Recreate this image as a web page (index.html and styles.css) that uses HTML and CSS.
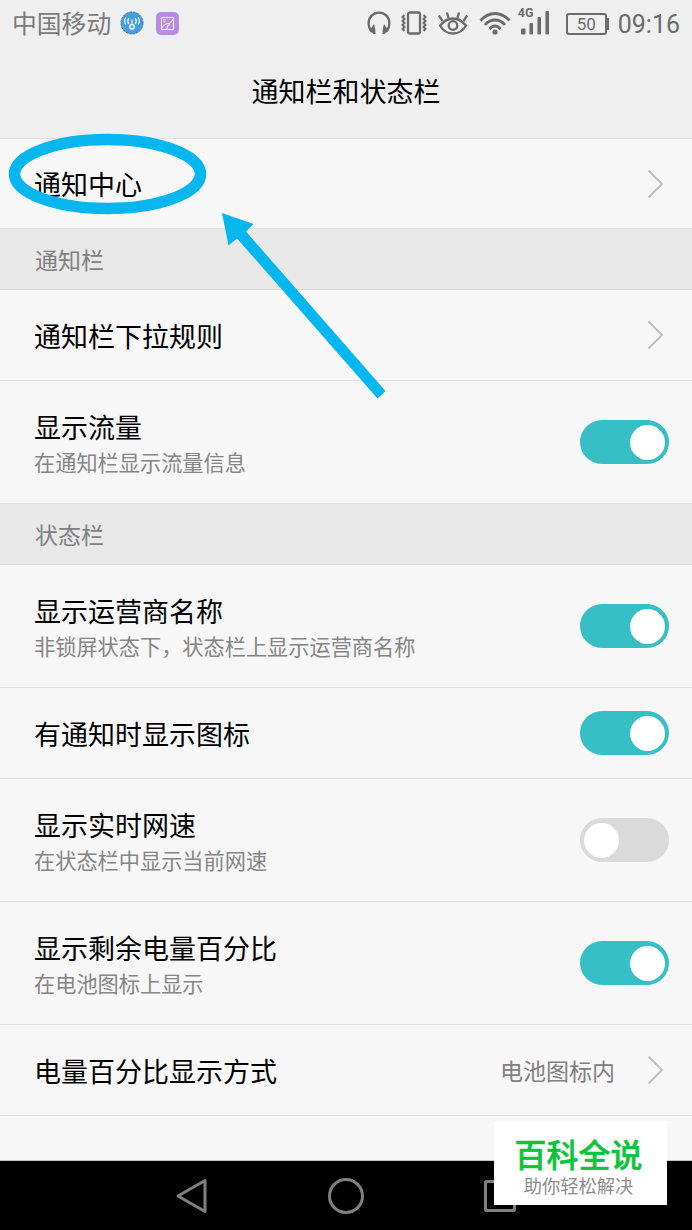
FILE: index.html
```html
<!DOCTYPE html>
<html lang="zh-CN">
<head>
    <meta charset="UTF-8">
    <meta name="viewport" content="width=device-width, initial-scale=1.0">
    <title>通知栏和状态栏</title>
    <link rel="stylesheet" href="styles.css">
</head>
<body>
    <div class="status-bar">
        <span class="carrier">中国移动</span>
        <svg class="hotspot" width="24" height="24" viewBox="0 0 24 24" fill="none">
            <circle cx="12" cy="12" r="11" fill="#459fdf"/>
            <circle cx="12" cy="12" r="11" stroke="#536f83" stroke-dasharray="2.500 1"/>
            <path d="M8.800 7q-2 3 0 6M15.200 7q2 3 0 6M5.800 6.500q-2.300 3.500 0 7M18.200 6.500q2.300 3.500 0 7M12 8.500v5" stroke="#fff" stroke-width="1.200"/>
            <circle cx="12" cy="15.800" r="2.200" stroke="#fff" stroke-width="1.300"/>
        </svg>
        <svg class="gallery" width="23" height="23" viewBox="0 0 23 23" fill="none">
            <rect width="23" height="23" rx="5" fill="#b98be0"/>
            <rect x="5.500" y="5.500" width="12" height="12" stroke="#f0e2fa" stroke-width="1.200"/>
            <path d="M6 15.500q3-4 6-4t5.500-5M11 17q0-3.500 3-5" stroke="#f0e2fa" stroke-width="1.200"/>
            <circle cx="8.500" cy="8.500" r="1.200" stroke="#f0e2fa" stroke-width=".8"/>
        </svg>
        <div class="status-icons">
            <svg width="24" height="24" viewBox="0 0 24 24">
                <path d="M4.500 20.500C2.500 18 1.600 15.500 1.600 12.500C1.600 6 6 1.600 12 1.600S22.400 6 22.400 12.500C22.400 15.500 21.500 18 19.500 20.500" fill="none" stroke="#6b6b6b" stroke-width="2.300"/>
                <path d="M7 13q1.500 4 1.500 10H6.500L2.500 19.500zM17 13q-1.500 4-1.500 10h2L21.500 19.500z" fill="#6b6b6b"/>
            </svg>
            <svg class="vibrate" width="26" height="24" viewBox="0 0 26 24" fill="none" stroke="#6b6b6b" stroke-width="2">
                <rect x="7" y="1.500" width="12" height="21" rx="2" stroke-width="2.300"/>
                <path d="M3.500 4L1.500 6l2 2-2 2 2 2-2 2 2 2-2 2 2 2M22.500 4l2 2-2 2 2 2-2 2 2 2-2 2 2 2-2 2"/>
            </svg>
            <svg class="eye" width="30" height="24" viewBox="0 0 30 24" fill="none" stroke="#6b6b6b" stroke-width="2.300">
                <path d="M2 14.500Q8 7.500 15 7.500T28 14.500Q23.500 22.500 15 22.500T2 14.500z"/>
                <circle cx="15" cy="14.500" r="4.300"/>
                <path d="M4.500 10L.800 4.500M10.500 7L9 1.500M19.500 7L21 1.500M25.500 10l3.700-5.500"/>
            </svg>
            <svg class="wifi" width="32" height="24" viewBox="0 0 32 24" fill="none" stroke="#6b6b6b" stroke-width="2.800">
                <path d="M1.500 9.500Q8 2.500 16 2.500T30.500 9.500M6 14Q10 9 16 9T26 14M10.500 18Q13 15 16 15T21.500 18"/>
                <circle cx="16" cy="21" r="2.600" fill="#6b6b6b" stroke="none"/>
            </svg>
            <div class="signal">
                <span class="network">4G</span>
                <svg width="29" height="24" viewBox="0 0 29 24" fill="#6b6b6b">
                    <rect x="0" y="17.500" width="4.500" height="6" rx="1"/>
                    <rect x="8.500" y="12" width="3.500" height="11.500" rx="1"/>
                    <rect x="16.500" y="6" width="3.500" height="17.500" rx="1"/>
                    <rect x="24.500" y="0" width="3.500" height="23.500" rx="1"/>
                </svg>
            </div>
            <div class="battery">50</div>
            <span class="time">09:16</span>
        </div>
    </div>

    <h1>通知栏和状态栏</h1>

    <div class="settings">
        <div class="row first">
            <div class="name">通知中心</div>
            <svg class="arrow" width="17" height="30" viewBox="0 0 17 30"><path d="M1.500 1.500L15 15 1.500 28.500"/></svg>
        </div>

        <h2>通知栏</h2>
        <div class="row">
            <div class="name">通知栏下拉规则</div>
            <svg class="arrow" width="17" height="30" viewBox="0 0 17 30"><path d="M1.500 1.500L15 15 1.500 28.500"/></svg>
        </div>
        <div class="row tall">
            <div>
                <div class="name">显示流量</div>
                <div class="desc">在通知栏显示流量信息</div>
            </div>
            <div class="toggle on"></div>
        </div>

        <h2>状态栏</h2>
        <div class="row tall">
            <div>
                <div class="name">显示运营商名称</div>
                <div class="desc">非锁屏状态下，状态栏上显示运营商名称</div>
            </div>
            <div class="toggle on"></div>
        </div>
        <div class="row">
            <div class="name">有通知时显示图标</div>
            <div class="toggle on"></div>
        </div>
        <div class="row tall">
            <div>
                <div class="name">显示实时网速</div>
                <div class="desc">在状态栏中显示当前网速</div>
            </div>
            <div class="toggle"></div>
        </div>
        <div class="row tall">
            <div>
                <div class="name">显示剩余电量百分比</div>
                <div class="desc">在电池图标上显示</div>
            </div>
            <div class="toggle on"></div>
        </div>
        <div class="row">
            <div class="name">电量百分比显示方式</div>
            <div class="value">电池图标内</div>
            <svg class="arrow" width="17" height="30" viewBox="0 0 17 30"><path d="M1.500 1.500L15 15 1.500 28.500"/></svg>
        </div>
    </div>

    <div class="nav-bar">
        <svg width="34" height="38" viewBox="0 0 34 38"><path d="M3 19L30 3.500v31z"/></svg>
        <svg width="38" height="38" viewBox="0 0 38 38"><circle cx="19" cy="19" r="16.500"/></svg>
        <svg width="34" height="38" viewBox="0 0 34 38"><rect x="2.500" y="4.500" width="29" height="29" rx="1"/></svg>
    </div>

    <!-- circle and arrow pointing at the first item -->
    <svg class="marker" width="400" height="410" viewBox="0 0 400 410">
        <ellipse cx="107.500" cy="174" rx="93" ry="34.500" fill="none" stroke="#05b7ee" stroke-width="11.500"/>
        <path d="M222 213L253.500 224 246 231.500 385.500 391 377.500 398.500 237 238.500 228.500 245.500z" fill="#05b7ee"/>
    </svg>

    <div class="badge">
        <div class="badge-title">百科全说</div>
        <div class="badge-text">助你轻松解决</div>
    </div>
</body>
</html>
```

FILE: styles.css
```css
* {
    box-sizing: border-box;
}

body {
    margin: 0;
    position: relative;
    height: 1230px;
    display: flex;
    flex-direction: column;
    background-color: #f7f7f7;
    color: #000;
    font-family: "Noto Sans CJK SC", sans-serif;
    overflow: hidden;
}

.status-bar {
    display: flex;
    align-items: center;
    height: 46px;
    padding: 0 12px;
    background-color: #efefef;
    color: #6b6b6b;
}

.carrier {
    padding-bottom: 2px;
    font-size: 24.800px;
    line-height: 44px;
    color: #7b7b7b;
}

.hotspot {
    margin-left: 9px;
}

.gallery {
    margin-left: 12px;
}

.status-icons {
    display: flex;
    align-items: center;
    margin-left: auto;
}

.vibrate {
    margin-left: 10px;
}

.eye {
    margin-left: 11px;
}

.wifi {
    margin-left: 11px;
}

.signal {
    position: relative;
    height: 24px;
    margin-left: 10px;
}

.network {
    position: absolute;
    top: -5px;
    left: -3px;
    font: bold 12.500px/14px Roboto, sans-serif;
}

.battery {
    position: relative;
    width: 41px;
    height: 22px;
    margin: 1px 0 0 16px;
    border: 2px solid #6b6b6b;
    border-radius: 3px;
    font: 17px/19px Roboto, sans-serif;
    text-align: center;
}

.battery::after {
    content: "";
    position: absolute;
    top: 3px;
    right: -4px;
    width: 3px;
    height: 12px;
    background-color: #6b6b6b;
}

.time {
    margin-left: 11px;
    padding-top: 3px;
    font: 25px/43px Roboto, sans-serif;
}

h1 {
    height: 93px;
    margin: 0;
    background-color: #efefef;
    border-bottom: 1px solid #dfdfdf;
    font-size: 27px;
    font-weight: 400;
    line-height: 90px;
    text-align: center;
}

.settings {
    flex: 1;
    border-bottom: 1px solid #c8c8c8;
}

h2 {
    height: 61px;
    margin: 0;
    padding-left: 35px;
    background-color: #e8e8e8;
    border-bottom: 1px solid #dadada;
    font-size: 23px;
    font-weight: 400;
    line-height: 61px;
    color: #808080;
}

.row {
    display: flex;
    align-items: center;
    height: 91px;
    padding: 0 23px 0 34px;
    border-bottom: 1px solid #dfdfdf;
}

.row.first {
    height: 90px;
}

.row.tall {
    height: 123px;
}

.name {
    padding-top: 2px;
    font-size: 27px;
    line-height: 38px;
}

.row.first .name {
    padding-top: 0;
}

.tall .name {
    padding-top: 3px;
    line-height: 37px;
}

.desc {
    font-size: 21.200px;
    line-height: 34px;
    color: #858585;
}

.value {
    margin-left: auto;
    font-size: 23px;
    color: #808080;
}

.arrow {
    margin-left: auto;
    margin-right: 5px;
    fill: none;
    stroke: #bdbdbd;
    stroke-width: 1.800;
}

.value + .arrow {
    margin-left: 32px;
}

.toggle {
    display: flex;
    align-items: center;
    width: 89px;
    height: 44px;
    margin-left: auto;
    padding: 0 4px;
    border-radius: 22px;
    background-color: #dadada;
}

.toggle.on {
    justify-content: flex-end;
    background-color: #36bfc5;
}

.toggle::before {
    content: "";
    width: 35px;
    height: 35px;
    border-radius: 50%;
    background-color: #fff;
}

.nav-bar {
    display: flex;
    align-items: center;
    justify-content: center;
    gap: 118px;
    height: 69px;
    background-color: #000;
}

.nav-bar svg {
    fill: none;
    stroke: #808080;
    stroke-width: 3;
    stroke-linejoin: round;
}

.marker {
    position: absolute;
    top: 0;
    left: 0;
}

.badge {
    position: absolute;
    right: 25px;
    bottom: 25px;
    width: 173px;
    height: 84px;
    padding: 12px 4px 0 0;
    background-color: #fff;
    text-align: center;
}

.badge-title {
    font-size: 32px;
    font-weight: 500;
    line-height: 40px;
    color: #0cc43a;
    -webkit-text-stroke: 0.5px #0cc43a;
}

.badge-text {
    font-size: 18.300px;
    line-height: 25px;
    color: #8c8c8c;
}
```
